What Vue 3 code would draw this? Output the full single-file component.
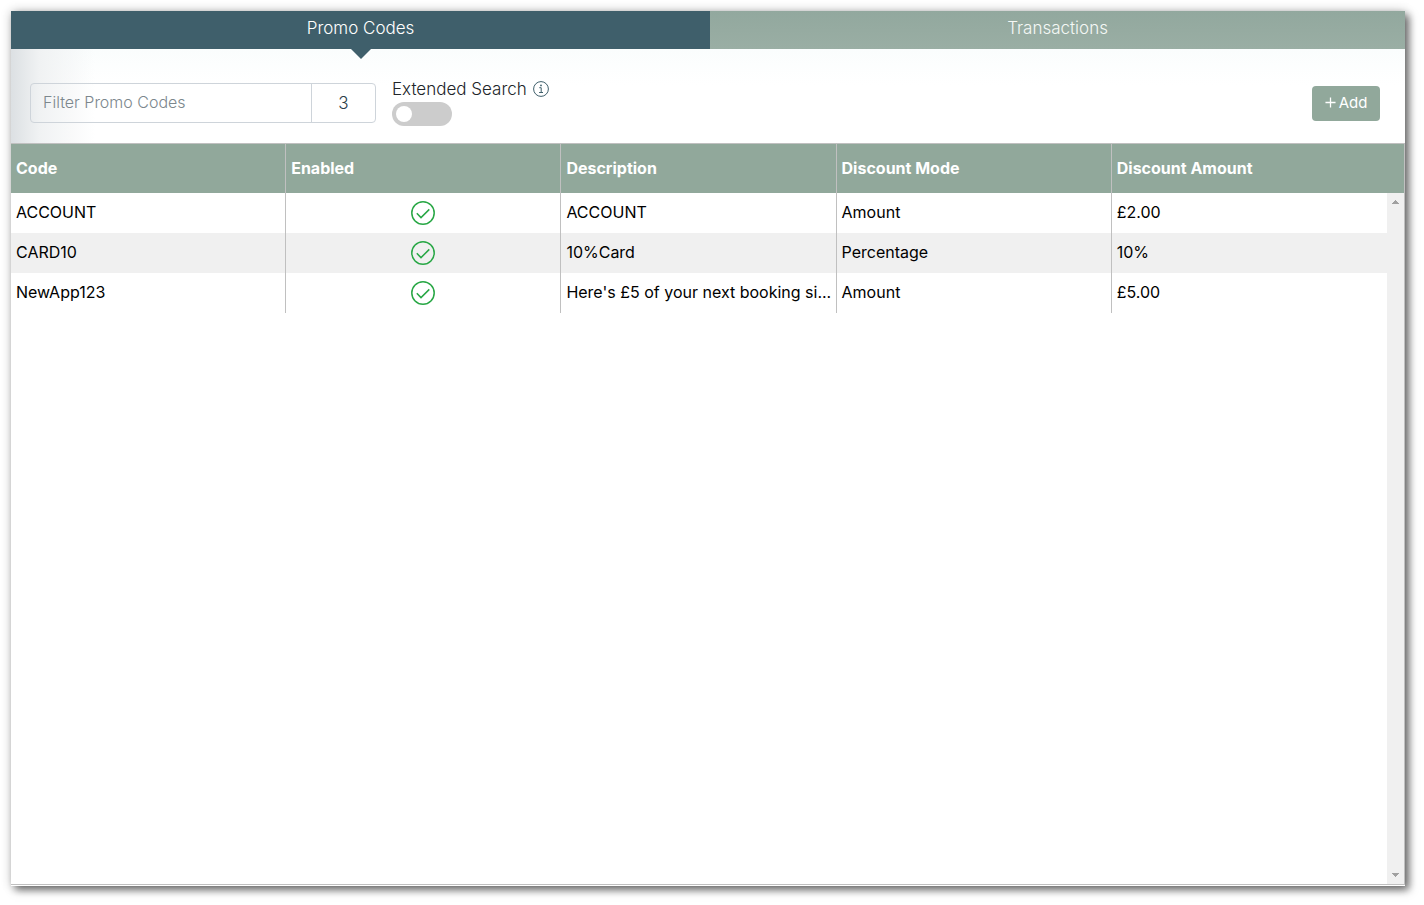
<script setup>
import { computed, ref } from 'vue'

const tabs = ['Promo Codes', 'Transactions']
const activeTab = ref('Promo Codes')
const filter = ref('')
const extended = ref(false)

const promos = [
  { code: 'ACCOUNT', description: 'ACCOUNT', mode: 'Amount', amount: '£2.00' },
  { code: 'CARD10', description: '10%Card', mode: 'Percentage', amount: '10%' },
  { code: 'NewApp123', description: "Here's £5 of your next booking si...", mode: 'Amount', amount: '£5.00' },
]

const visible = computed(() =>
  promos.filter((p) => p.code.toLowerCase().includes(filter.value.toLowerCase())),
)
</script>

<template>
  <main class="panel">
    <nav class="tabs">
      <button
        v-for="tab in tabs"
        :key="tab"
        type="button"
        class="tab"
        :class="{ active: tab === activeTab }"
        @click="activeTab = tab"
      >{{ tab }}</button>
    </nav>

    <section class="toolbar">
      <div class="filter">
        <input v-model="filter" class="filter-input" type="text" placeholder="Filter Promo Codes" aria-label="Filter Promo Codes" />
        <span class="count">{{ visible.length }}</span>
      </div>
      <div class="extended">
        <label class="extended-label" for="extended">
          Extended Search
          <svg class="info" viewBox="0 0 16 16" aria-hidden="true">
            <circle cx="8" cy="8" r="7.4" />
            <path d="M6.3 6.7H8.2V11.4M6.1 11.5H10" />
            <circle class="dot" cx="8" cy="4.4" r="0.9" />
          </svg>
        </label>
        <input id="extended" v-model="extended" class="switch" type="checkbox" />
      </div>
      <button type="button" class="add">
        <svg class="plus" viewBox="0 0 12 12" aria-hidden="true"><path d="M6 0.5V11.5M0.5 6H11.5" /></svg>
        Add
      </button>
    </section>

    <section class="list">
      <div class="scroll">
        <table class="grid">
          <thead>
            <tr>
              <th>Code</th>
              <th>Enabled</th>
              <th>Description</th>
              <th>Discount Mode</th>
              <th>Discount Amount</th>
            </tr>
          </thead>
          <tbody>
            <tr v-for="p in visible" :key="p.code">
              <td>{{ p.code }}</td>
              <td class="enabled">
                <svg class="check" viewBox="0 0 24 24" role="img" aria-label="Enabled">
                  <circle cx="12" cy="12" r="11.2" />
                  <path d="M5.8 12.3L10 16.6L18.3 8.4" />
                </svg>
              </td>
              <td>{{ p.description }}</td>
              <td>{{ p.mode }}</td>
              <td>{{ p.amount }}</td>
            </tr>
          </tbody>
        </table>
      </div>
      <div class="gutter" aria-hidden="true">
        <div class="gutter-head"></div>
        <div class="track">
          <svg class="arrow" viewBox="0 0 7 4" shape-rendering="crispEdges"><path d="M0 4L3.5 0L7 4Z" /></svg>
          <svg class="arrow" viewBox="0 0 7 4" shape-rendering="crispEdges"><path d="M0 0L3.5 4L7 0Z" /></svg>
        </div>
      </div>
    </section>
  </main>
</template>

<style>
body {
  background: #fff;
}
</style>

<style scoped>
* {
  box-sizing: border-box;
}

.panel {
  display: flex;
  flex-direction: column;
  min-height: calc(100vh - 30px);
  margin: 11px 19px 19px 11px;
  padding-bottom: 1px;
  background: #fff;
  box-shadow: 4px 4px 8px rgba(0, 0, 0, 0.55), 0 0 10px rgba(0, 0, 0, 0.2);
  color: #212529;
  font-family: Inter, 'Liberation Sans', sans-serif;
  font-size: 17px;
  font-weight: 300;
  line-height: 24px;
}

button,
input {
  font: inherit;
}

.tabs {
  display: flex;
}

.tab {
  position: relative;
  flex: 1 1 0;
  height: 38px;
  padding: 0 0 4px;
  border: 0;
  background: linear-gradient(#92a89e, #9aaea4);
  color: #f4f8f5;
}

.tab.active {
  flex-grow: 1.006;
  background: #3f5f6b;
  color: #fff;
}

.tab.active::after {
  content: '';
  position: absolute;
  top: 100%;
  left: 50%;
  margin-left: -10px;
  border: 10px solid transparent;
  border-top-color: #3f5f6b;
  border-bottom: 0;
}

.toolbar {
  display: flex;
  align-items: flex-start;
  gap: 16px;
  height: 94px;
  padding: 28px 25px 0 19px;
  background:
    linear-gradient(to right, #dce0e3, #f0f2f3 28px, rgba(255, 255, 255, 0) 84px),
    linear-gradient(#fafdfd, #fff 36px);
}

.filter {
  display: flex;
  width: 346px;
  height: 40px;
  margin-top: 6px;
  border: 1px solid #ced4da;
  border-radius: 4px;
  overflow: hidden;
}

.filter-input {
  flex: 1;
  min-width: 0;
  padding: 0 12px 2px;
  border: 0;
  outline: 0;
  background: transparent;
  color: #495057;
  font-size: 16px;
}

.filter-input::placeholder {
  color: #7c878d;
  opacity: 1;
}

.count {
  width: 64px;
  border-left: 1px solid #ced4da;
  line-height: 38px;
  text-align: center;
  color: #2b3d49;
}

.extended {
  display: flex;
  flex-direction: column;
}

.extended-label {
  display: flex;
  align-items: center;
  gap: 6px;
  height: 25px;
  padding-bottom: 2px;
}

.info {
  width: 16px;
  height: 16px;
  fill: none;
  stroke: #3f5f6b;
  stroke-width: 1;
}

.info .dot {
  fill: #3f5f6b;
  stroke: none;
}

.switch {
  appearance: none;
  width: 60px;
  height: 24px;
  margin: 0;
  padding: 4px;
  border-radius: 12px;
  background: #ccc;
}

.switch::before {
  content: '';
  display: block;
  width: 16px;
  height: 16px;
  border-radius: 50%;
  background: #fff;
}

.switch:checked {
  background: #3f5f6b;
}

.switch:checked::before {
  margin-left: auto;
}

.add {
  display: flex;
  align-items: center;
  justify-content: center;
  gap: 3px;
  width: 68px;
  height: 35px;
  margin: 9px 0 0 auto;
  padding: 0 0 2px;
  border: 0;
  border-radius: 4px;
  background: #91a89b;
  color: #fff;
  font-size: 15px;
  font-weight: 400;
}

.plus {
  width: 11px;
  height: 11px;
  fill: none;
  stroke: #fff;
  stroke-width: 1.4;
}

.list {
  display: flex;
  flex: 1;
  border: solid #c0c0c0;
  border-width: 1px 1px 1px 0;
}

.scroll {
  flex: 1;
  min-width: 0;
}

.grid {
  width: 100%;
  table-layout: fixed;
  border-collapse: separate;
  border-spacing: 0;
  color: #000;
  font-size: 16px;
  font-weight: 400;
}

th,
td {
  height: 40px;
  padding: 0 2px 2px 5px;
  border-right: 1px solid #c0c0c0;
  overflow: hidden;
  text-align: left;
  text-overflow: ellipsis;
  white-space: nowrap;
}

th {
  height: 49px;
  background: #91a89b;
  color: #fff;
  font-weight: 700;
}

th:last-child,
td:last-child {
  border-right: 0;
}

tbody tr:nth-child(even) {
  background: #f0f0f0;
}

.enabled {
  padding: 0;
}

.check {
  display: block;
  width: 24px;
  height: 24px;
  margin: 0 auto;
  fill: none;
  stroke: #28a745;
  stroke-width: 1.5;
}

.gutter {
  display: flex;
  flex-direction: column;
  width: 17px;
}

.gutter-head {
  height: 49px;
  background: #91a89b;
}

.track {
  display: flex;
  flex: 1;
  flex-direction: column;
  align-items: center;
  justify-content: space-between;
  padding: 7px 0;
  background: #f0f0f0;
}

.arrow {
  width: 7px;
  height: 4px;
  fill: #a0a0a0;
}
</style>
